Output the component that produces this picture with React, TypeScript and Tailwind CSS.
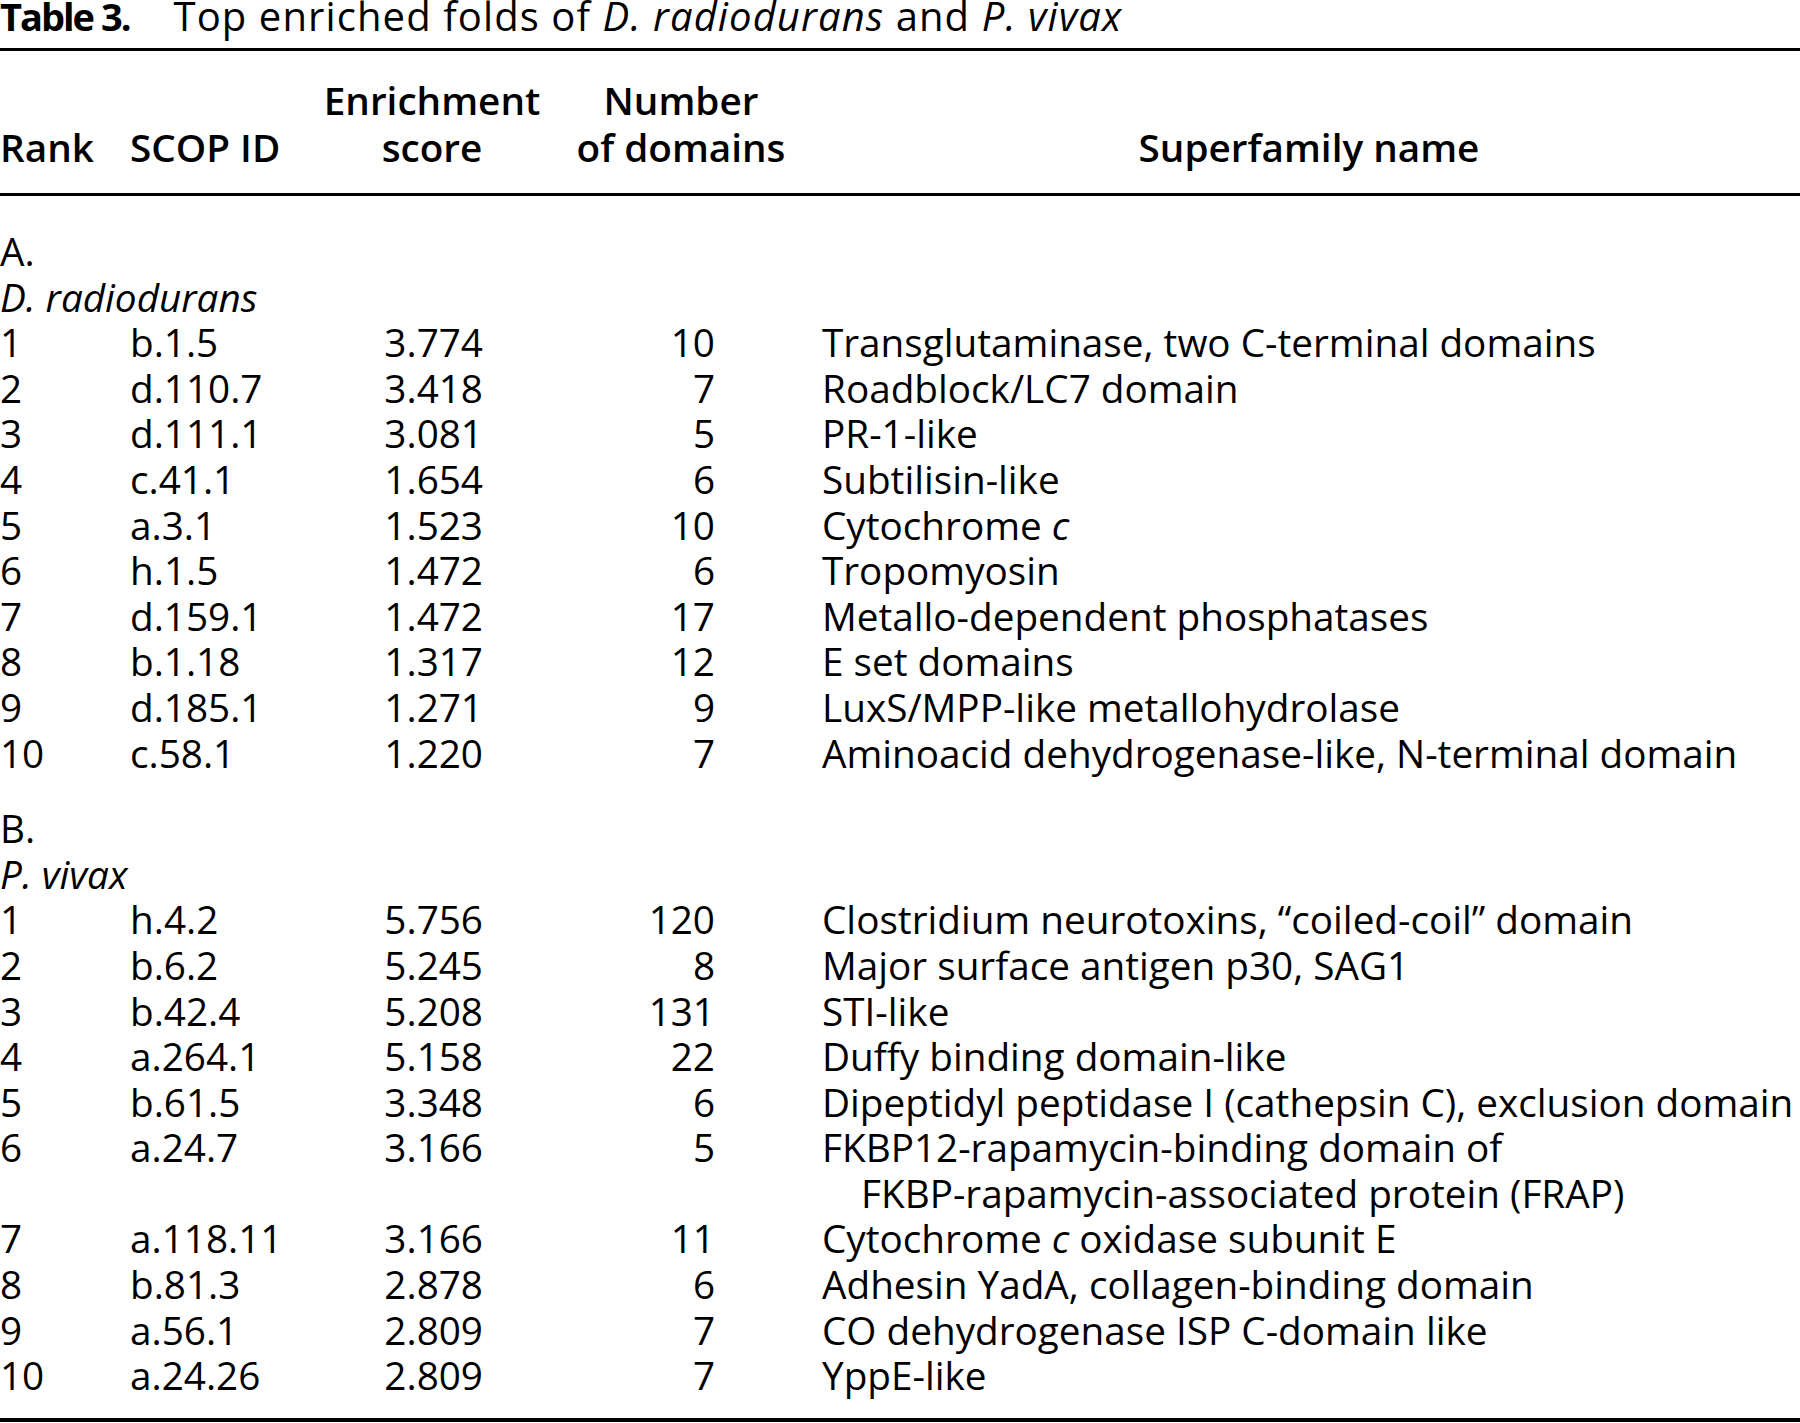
import React from "react";

type Row = {
  rank: string;
  scop: string;
  score: string;
  count: string;
  name: React.ReactNode;
  more?: string;
};

const radiodurans: Row[] = [
  { rank: "1", scop: "b.1.5", score: "3.774", count: "10", name: "Transglutaminase, two C-terminal domains" },
  { rank: "2", scop: "d.110.7", score: "3.418", count: "7", name: "Roadblock/LC7 domain" },
  { rank: "3", scop: "d.111.1", score: "3.081", count: "5", name: "PR-1-like" },
  { rank: "4", scop: "c.41.1", score: "1.654", count: "6", name: "Subtilisin-like" },
  { rank: "5", scop: "a.3.1", score: "1.523", count: "10", name: <>Cytochrome <i>c</i></> },
  { rank: "6", scop: "h.1.5", score: "1.472", count: "6", name: "Tropomyosin" },
  { rank: "7", scop: "d.159.1", score: "1.472", count: "17", name: "Metallo-dependent phosphatases" },
  { rank: "8", scop: "b.1.18", score: "1.317", count: "12", name: "E set domains" },
  { rank: "9", scop: "d.185.1", score: "1.271", count: "9", name: "LuxS/MPP-like metallohydrolase" },
  { rank: "10", scop: "c.58.1", score: "1.220", count: "7", name: "Aminoacid dehydrogenase-like, N-terminal domain" },
];

const vivax: Row[] = [
  { rank: "1", scop: "h.4.2", score: "5.756", count: "120", name: "Clostridium neurotoxins, \u201ccoiled-coil\u201d domain" },
  { rank: "2", scop: "b.6.2", score: "5.245", count: "8", name: "Major surface antigen p30, SAG1" },
  { rank: "3", scop: "b.42.4", score: "5.208", count: "131", name: "STI-like" },
  { rank: "4", scop: "a.264.1", score: "5.158", count: "22", name: "Duffy binding domain-like" },
  { rank: "5", scop: "b.61.5", score: "3.348", count: "6", name: "Dipeptidyl peptidase I (cathepsin C), exclusion domain" },
  {
    rank: "6",
    scop: "a.24.7",
    score: "3.166",
    count: "5",
    name: "FKBP12-rapamycin-binding domain of",
    more: "FKBP-rapamycin-associated protein (FRAP)",
  },
  { rank: "7", scop: "a.118.11", score: "3.166", count: "11", name: <>Cytochrome <i>c</i> oxidase subunit E</> },
  { rank: "8", scop: "b.81.3", score: "2.878", count: "6", name: "Adhesin YadA, collagen-binding domain" },
  { rank: "9", scop: "a.56.1", score: "2.809", count: "7", name: "CO dehydrogenase ISP C-domain like" },
  { rank: "10", scop: "a.24.26", score: "2.809", count: "7", name: "YppE-like" },
];

function Section({ label, species, rows }: { label: string; species: string; rows: Row[] }) {
  return (
    <div className="leading-[45.6px]">
      <div>{label}</div>
      <div className="italic">{species}</div>
      {rows.map((r) => (
        <div key={r.rank} className="grid grid-cols-[130px_190px_163px_232px_1fr]">
          <div>{r.rank}</div>
          <div>{r.scop}</div>
          <div className="text-right">{r.score}</div>
          <div className="text-right">{r.count}</div>
          <div className="pl-[107px] whitespace-nowrap">
            <div>{r.name}</div>
            {r.more && <div className="pl-[39px]">{r.more}</div>}
          </div>
        </div>
      ))}
    </div>
  );
}

export default function App() {
  return (
    <div className="w-[1800px] h-[1423px] overflow-hidden bg-white text-black font-['Open_Sans',sans-serif] text-[38.7px]">
      <div className="h-[28px] pt-[3px] text-[40px] leading-[25px] whitespace-nowrap">
        <span className="text-[38px] font-bold tracking-[-2px] mr-[44px]">Table 3.</span>
        <span className="tracking-[1.1px]">
          Top enriched folds of <i>D. radiodurans</i> and <i>P. vivax</i>
        </span>
      </div>
      <div className="mt-[20px] h-[3px] bg-black" />

      <div className="pt-[26px] grid grid-cols-[130px_190px_224px_274px_1fr] items-end leading-[47px] font-semibold whitespace-nowrap">
        <div>Rank</div>
        <div>SCOP ID</div>
        <div className="text-center">
          Enrichment
          <br />
          score
        </div>
        <div className="text-center">
          Number
          <br />
          of domains
        </div>
        <div className="text-center">Superfamily name</div>
      </div>
      <div className="mt-[22px] h-[3px] bg-black" />

      <div className="pt-[33px]">
        <Section label="A." species="D. radiodurans" rows={radiodurans} />
      </div>
      <div className="mt-[30px]">
        <Section label="B." species="P. vivax" rows={vivax} />
      </div>
      <div className="mt-[19px] h-[4px] bg-black" />
    </div>
  );
}
